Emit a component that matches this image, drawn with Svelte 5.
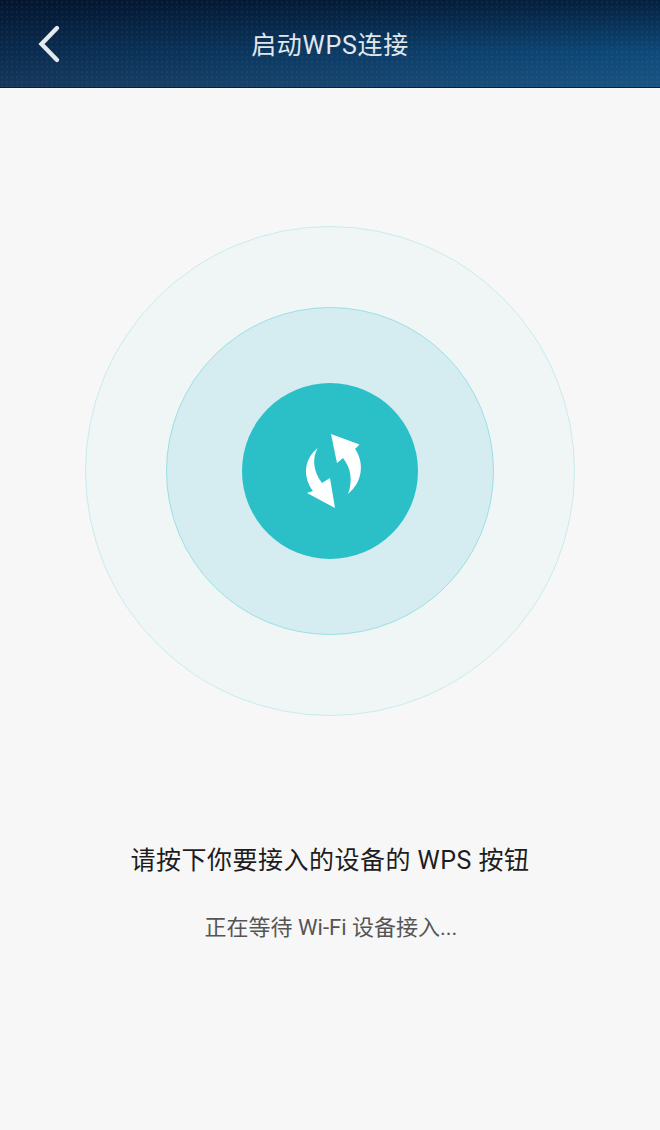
<script>
  const title = "启动WPS连接";
</script>

<div class="page">
  <header class="bar">
    <button class="back" aria-label="返回">
      <svg width="26" height="42" viewBox="0 0 26 42">
        <path d="M20 5 L4.5 21 L20 37" fill="none" stroke="#e4e9ee" stroke-width="4.4" stroke-linecap="round" stroke-linejoin="miter" />
      </svg>
    </button>
    <h1>{title}</h1>
  </header>

  <main>
    <div class="ring outer">
      <div class="ring middle">
        <div class="ring inner">
          <svg width="100" height="100" viewBox="0 0 100 100">
            <path fill="#fff" d="M51 13 L79.5 23.5 L75 28 C82 37 86 58 68 73 C73 60 71 47 63 37 L57 42 Z" />
            <path fill="#fff" d="M55 87 L27 72 L33 70 C24 58 22 40 37.7 27 C32 37 33 50 42 62 L50 57 Z" />
          </svg>
        </div>
      </div>
    </div>

    <p class="prompt">请按下你要接入的设备的 WPS 按钮</p>
    <p class="status">正在等待 Wi-Fi 设备接入...</p>
  </main>
</div>

<style>
  :global(body) {
    margin: 0;
    background: #f7f7f7;
  }
  .page {
    height: 1130px;
    overflow: hidden;
    background: #f7f7f7;
    font-family: Roboto, "Noto Sans CJK SC", sans-serif;
  }
  .bar {
    height: 87px;
    display: flex;
    align-items: center;
    justify-content: center;
    position: relative;
    border-bottom: 1px solid #0a2034;
    background-image:
      radial-gradient(circle at 2px 2px, rgba(150, 190, 225, 0.06) 1px, transparent 1.6px),
      linear-gradient(to bottom, rgba(0, 10, 30, 0.65), rgba(0, 10, 30, 0) 60%, rgba(130, 175, 215, 0.1)),
      linear-gradient(to right, #0a2b4e, #0e4a7a);
    background-size: 5px 5px, auto, auto;
  }
  .back {
    position: absolute;
    left: 37px;
    top: 23px;
    padding: 0;
    border: 0;
    background: none;
    display: flex;
  }
  h1 {
    margin: 0 0 2px;
    font-size: 25px;
    font-weight: 400;
    letter-spacing: 0.7px;
    color: #e2e7ec;
  }
  main {
    display: flex;
    flex-direction: column;
    align-items: center;
    padding-top: 138px;
  }
  .ring {
    border-radius: 50%;
    display: flex;
    align-items: center;
    justify-content: center;
    box-sizing: border-box;
  }
  .outer {
    width: 490px;
    height: 490px;
    background: #f0f5f6;
    border: 1px solid #c9ecec;
  }
  .middle {
    width: 328px;
    height: 328px;
    background: #d5edf0;
    border: 1px solid #9be0e2;
  }
  .inner {
    width: 176px;
    height: 176px;
    background: #2bc0c8;
  }
  .prompt {
    margin: 127px 0 0;
    font-size: 25px;
    line-height: 36px;
    letter-spacing: 0.5px;
    color: #1d1d1d;
  }
  .status {
    margin: 33px 0 0 2px;
    font-size: 22px;
    line-height: 32px;
    color: #555;
  }
</style>
